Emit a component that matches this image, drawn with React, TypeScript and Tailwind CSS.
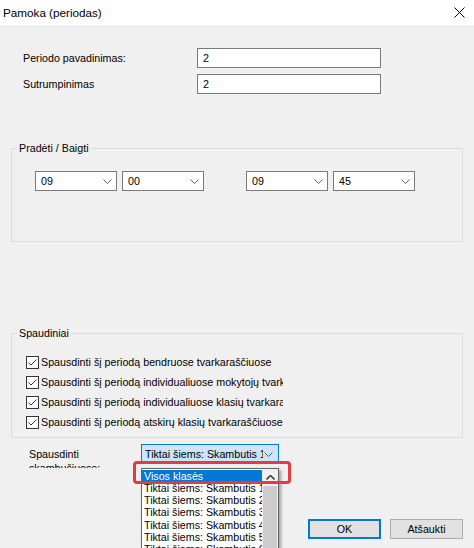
import React from 'react'

// Small down/up chevron used by the combo boxes and the scrollbar
function Chevron({ up = false, className = '' }: { up?: boolean; className?: string }) {
  return (
    <svg width="9" height="5" viewBox="0 0 9 5" className={className}>
      <polyline
        points={up ? '0.5,4.5 4.5,0.5 8.5,4.5' : '0.5,0.5 4.5,4.5 8.5,0.5'}
        fill="none"
        stroke={up ? '#404040' : '#606060'}
        strokeWidth={up ? 1.6 : 1}
      />
    </svg>
  )
}

function Combo({ value }: { value: string }) {
  return (
    <div className="flex h-[20px] w-[82px] items-center justify-between border border-[#7a7a7a] bg-white pl-[5px] pr-[4px]">
      <span>{value}</span>
      <Chevron />
    </div>
  )
}

function CheckRow({ label }: { label: string }) {
  return (
    <div className="flex h-[20px] items-center">
      <span className="flex h-[13px] w-[13px] shrink-0 items-center justify-center border border-[#333333] bg-white">
        <svg width="11" height="11" viewBox="0 0 11 11">
          <polyline points="1.5,5.5 4,8 9.5,2.5" fill="none" stroke="#333333" strokeWidth="1" />
        </svg>
      </span>
      <span className="ml-[2px] w-[242px] overflow-hidden whitespace-nowrap">{label}</span>
    </div>
  )
}

const listItems = [
  'Tiktai šiems: Skambutis 1',
  'Tiktai šiems: Skambutis 2',
  'Tiktai šiems: Skambutis 3',
  'Tiktai šiems: Skambutis 4',
  'Tiktai šiems: Skambutis 5',
  'Tiktai šiems: Skambutis 6',
  'Tiktai šiems: Skambutis 7'
]

export default function App() {
  return (
    <div className="relative flex h-[548px] w-[474px] flex-col overflow-hidden bg-[#f0f0f0] font-['Segoe_UI','Liberation_Sans',Arial,sans-serif] text-[10.7px] leading-[14px] text-black">
      {/* title bar */}
      <div className="flex h-[25px] shrink-0 items-center justify-between bg-white pl-[3px] pr-[9px]">
        <span className="text-[11.7px]">Pamoka (periodas)</span>
        <svg width="11" height="11" viewBox="0 0 11 11">
          <path d="M0.5 0.5 L10.5 10.5 M10.5 0.5 L0.5 10.5" stroke="#000" strokeWidth="1" />
        </svg>
      </div>

      <div className="flex flex-col px-[11px]">
        {/* name fields */}
        <div className="flex flex-col gap-[6px] pt-[23px]">
          <div className="flex h-[20px] items-center">
            <span className="w-[186px] pl-[12px]">Periodo pavadinimas:</span>
            <div className="flex h-[20px] w-[184px] items-center border border-[#7a7a7a] bg-white pl-[5px]">2</div>
          </div>
          <div className="flex h-[20px] items-center">
            <span className="w-[186px] pl-[12px]">Sutrumpinimas</span>
            <div className="flex h-[20px] w-[184px] items-center border border-[#7a7a7a] bg-white pl-[5px]">2</div>
          </div>
        </div>

        {/* start / end */}
        <fieldset className="mt-[47px] border border-[#dcdcdc]">
          <legend className="ml-[5px] px-[2px]">Pradėti / Baigti</legend>
          <div className="flex pb-[50px] pl-[23px] pt-[16px]">
            <div className="flex gap-[5px]">
              <Combo value="09" />
              <Combo value="00" />
            </div>
            <div className="ml-[42px] flex gap-[5px]">
              <Combo value="09" />
              <Combo value="45" />
            </div>
          </div>
        </fieldset>

        {/* prints */}
        <fieldset className="mt-[84px] border border-[#dcdcdc]">
          <legend className="ml-[5px] px-[2px]">Spaudiniai</legend>
          <div className="flex flex-col pb-[5px] pl-[14px] pt-[12px]">
            <CheckRow label="Spausdinti šį periodą bendruose tvarkaraščiuose" />
            <CheckRow label="Spausdinti šį periodą individualiuose mokytojų tvarkaraščiuose" />
            <CheckRow label="Spausdinti šį periodą individualiuose klasių tvarkaraščiuose" />
            <CheckRow label="Spausdinti šį periodą atskirų klasių tvarkaraščiuose" />
          </div>
        </fieldset>

        {/* bells combo with open list */}
        <div className="mt-[6px] flex">
          <div className="mt-[3px] h-[21px] w-[130px] shrink-0 overflow-hidden pl-[18px] pr-[20px]">
            Spausdinti skambučiuose:
          </div>
          <div className="relative">
            <div className="flex h-[20px] w-[138px] items-center border border-[#0078d7] bg-[#cce4f7] pl-[3px] pr-[5px]">
              <span className="w-[118px] overflow-hidden whitespace-nowrap">Tiktai šiems: Skambutis 1</span>
              <Chevron className="ml-auto" />
            </div>

            <div className="absolute left-0 top-full z-10 flex h-[100px] w-[138px] border border-[#646464] bg-white shadow-[2px_2px_3px_rgba(0,0,0,0.35)]">
              <div className="flex w-[120px] flex-col pt-[1px]">
                <div className="h-[13px] overflow-hidden whitespace-nowrap bg-[#0078d7] pl-[2px] leading-[13px] text-white">
                  Visos klasės
                </div>
                {listItems.map((item) => (
                  <div key={item} className="h-[13px] overflow-hidden whitespace-nowrap pl-[2px] leading-[13px]">
                    {item}
                  </div>
                ))}
              </div>
              <div className="flex w-[16px] flex-col bg-[#f0f0f0]">
                <div className="flex h-[17px] items-center justify-center">
                  <Chevron up />
                </div>
                <div className="mx-[1px] flex-1 bg-[#cdcdcd]" />
              </div>
            </div>

            {/* red annotation */}
            <div className="absolute left-[-8px] top-[17px] z-20 h-[23px] w-[158px] rounded-[4px] border-[3px] border-[#e53a40]" />
          </div>
        </div>

        {/* buttons */}
        <div className="mt-[51px] flex justify-end gap-[9px]">
          <button className="flex h-[20px] w-[73px] items-center justify-center border-2 border-[#0078d7] bg-[#e1e1e1]">
            OK
          </button>
          <button className="flex h-[20px] w-[73px] items-center justify-center border border-[#adadad] bg-[#e1e1e1]">
            Atšaukti
          </button>
        </div>
      </div>
    </div>
  )
}
